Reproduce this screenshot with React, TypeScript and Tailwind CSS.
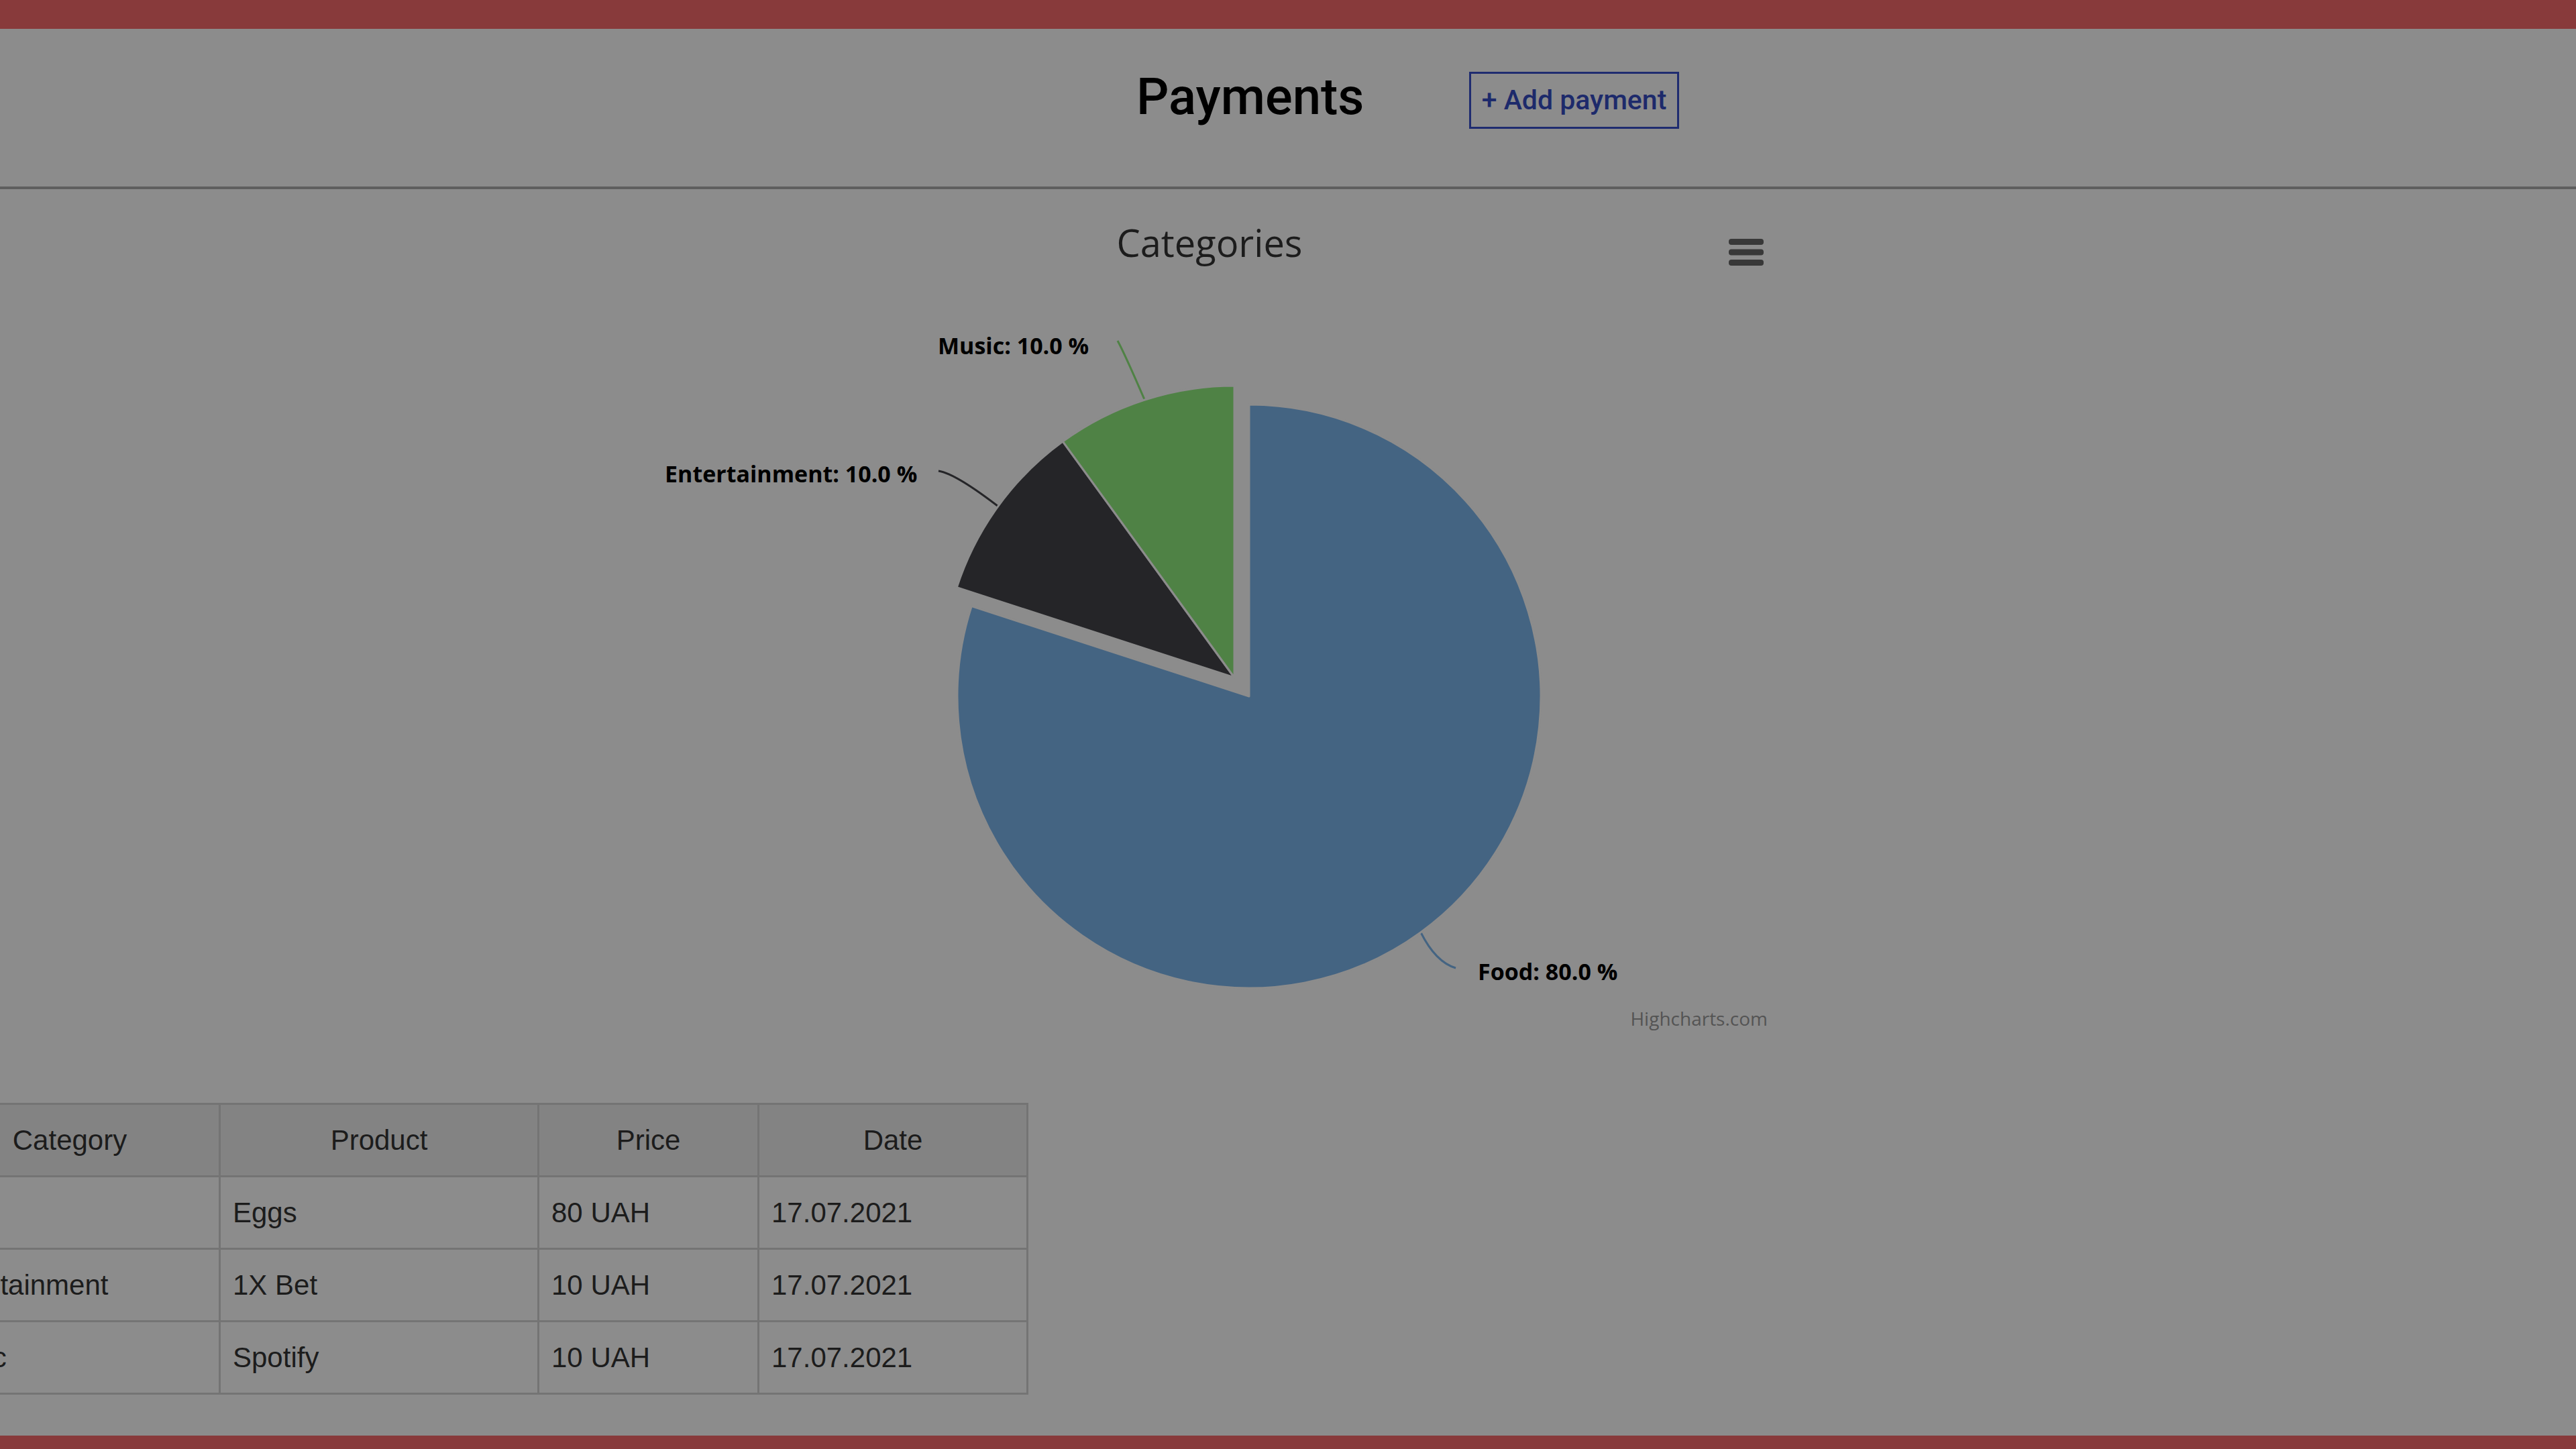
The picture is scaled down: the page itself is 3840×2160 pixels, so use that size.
import React from 'react';

const payments = [
  { category: 'Food', product: 'Eggs', price: '80 UAH', date: '17.07.2021' },
  { category: 'Entertainment', product: '1X Bet', price: '10 UAH', date: '17.07.2021' },
  { category: 'Music', product: 'Spotify', price: '10 UAH', date: '17.07.2021' },
];

// pie drawn in page pixels, y measured from the top of the chart box
const slices = [
  { name: 'Food', color: '#446482', d: 'M1862 756 L1862 321 A435 435 0 1 1 1448.29 621.58 Z' },
  { name: 'Entertainment', color: '#252528', d: 'M1840 728 L1426.29 593.58 A435 435 0 0 1 1584.31 376.08 Z' },
  { name: 'Music', color: '#4f8245', d: 'M1840 728 L1584.31 376.08 A435 435 0 0 1 1840 293 Z' },
];

function CategoriesChart() {
  return (
    <svg width={3840} height={1362} viewBox="0 0 3840 1362" className="block">
      <text x={1803} y={101} textAnchor="middle" className="font-['Open_Sans',sans-serif] text-[56px] fill-[#1c1c1c]">
        Categories
      </text>

      <g className="fill-[#383838]">
        <rect x={2577} y={74} width={52} height={9} rx={4} />
        <rect x={2577} y={89.5} width={52} height={9} rx={4} />
        <rect x={2577} y={105} width={52} height={9} rx={4} />
      </g>

      <g fill="none" strokeWidth={3}>
        <path d="M1666 226 Q1676 244 1708 318" stroke="#4f8245" />
        <path d="M1399 420 Q1425 424 1492 476" stroke="#252528" />
        <path d="M2118 1108 Q2140 1152 2170 1161" stroke="#446482" />
      </g>

      {slices.map((s) => (
        <path key={s.name} d={s.d} fill={s.color} stroke="#8c8c8c" strokeWidth={3} strokeLinejoin="round" />
      ))}

      <g className="font-['Open_Sans',sans-serif] text-[34px] font-bold fill-black">
        <text x={1398} y={246}>Music: 10.0 %</text>
        <text x={991} y={437}>Entertainment: 10.0 %</text>
        <text x={2203} y={1179}>Food: 80.0 %</text>
      </g>

      <text x={2635} y={1247} textAnchor="end" className="font-['Open_Sans',sans-serif] text-[28px] fill-[#545454]">
        Highcharts.com
      </text>
    </svg>
  );
}

export default function App() {
  return (
    <div className="h-[2160px] w-[3840px] overflow-hidden flex flex-col bg-[#8c8c8c]">
      <div className="h-[43px] shrink-0 bg-[#883a3b]" />

      <header className="h-[239px] shrink-0 flex items-start pl-[1694px] pt-[63px] border-b-4 border-[#5e5e5e] font-['Roboto',sans-serif]">
        <div className="w-[496px]">
          <h1 className="text-[76px] leading-none font-medium text-black">Payments</h1>
        </div>
        <button className="mt-px w-[313px] h-[85px] flex items-center justify-center border-[3px] border-[#1f2c70] text-[41px] leading-none font-medium text-[#1d2a6b]">
          + Add payment
        </button>
      </header>

      <main className="flex-1">
        <CategoriesChart />

        <table className="ml-[-121px] w-[1651px] table-fixed border-collapse border-[3px] border-[#747474] font-['Liberation_Sans',Arial,sans-serif] text-[42px] text-[#1c1c1c]">
          <colgroup>
            <col className="w-[447px]" />
            <col className="w-[475px]" />
            <col className="w-[328px]" />
            <col className="w-[401px]" />
          </colgroup>
          <thead>
            <tr className="bg-[#838383]">
              {['Category', 'Product', 'Price', 'Date'].map((h) => (
                <th key={h} className="h-[108px] border-[3px] border-[#747474] font-normal text-center">
                  {h}
                </th>
              ))}
            </tr>
          </thead>
          <tbody>
            {payments.map((p) => (
              <tr key={p.product}>
                <td className="h-[108px] border-[3px] border-[#747474] px-[18px] whitespace-nowrap">{p.category}</td>
                <td className="h-[108px] border-[3px] border-[#747474] px-[18px]">{p.product}</td>
                <td className="h-[108px] border-[3px] border-[#747474] px-[18px]">{p.price}</td>
                <td className="h-[108px] border-[3px] border-[#747474] px-[18px]">{p.date}</td>
              </tr>
            ))}
          </tbody>
        </table>
      </main>

      <div className="h-[20px] shrink-0 bg-[#883a3b]" />
    </div>
  );
}
